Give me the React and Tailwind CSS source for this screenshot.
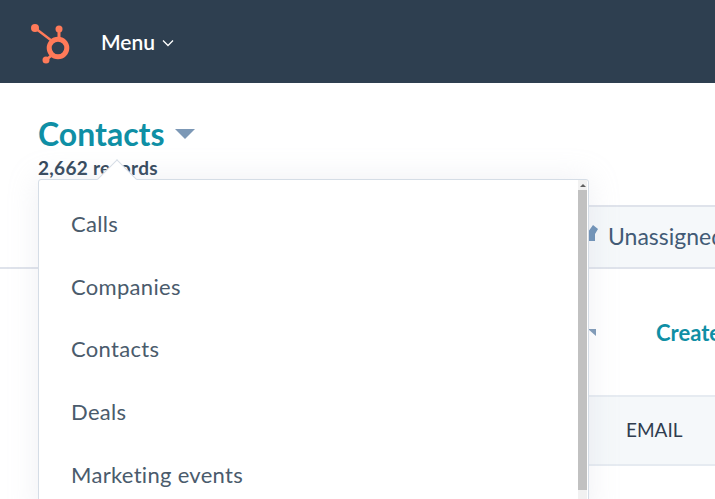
const items = ['Calls', 'Companies', 'Contacts', 'Deals', 'Marketing events'];

const App = () => {
  return (
    <div className="relative h-[499px] w-[715px] overflow-hidden bg-white font-['Lato',sans-serif] text-[#33475b]">
      {/* Top nav */}
      <header className="flex h-[83px] items-center bg-[#2e3f50] pl-[30px]">
        <svg width="42" height="44" viewBox="0 0 42 44" fill="none" className="shrink-0">
          <g stroke="#ff7a59" strokeLinecap="round">
            <circle cx="28" cy="28" r="8.8" strokeWidth="5" />
            <path d="M5 8 L22 21" strokeWidth="2.4" />
            <path d="M29 9 V18" strokeWidth="3" />
            <path d="M16 40 L22 35" strokeWidth="2.8" />
          </g>
          <circle cx="5" cy="8" r="4" fill="#ff7a59" />
          <circle cx="29" cy="9" r="3.5" fill="#ff7a59" />
          <circle cx="16" cy="40" r="3.5" fill="#ff7a59" />
        </svg>
        <span className="ml-[29px] text-[21px] font-semibold text-white">Menu</span>
        <svg width="12" height="8" viewBox="0 0 12 8" fill="none" className="ml-[7px] mt-[3px]">
          <path d="M1 1.5 L6 6.5 L11 1.5" stroke="#fff" strokeWidth="1.3" />
        </svg>
      </header>

      {/* Page heading */}
      <div className="pl-[38px] pt-[32px]">
        <div className="flex items-center">
          <h1 className="text-[32px] font-bold leading-[38px] text-[#0f8fa5]">Contacts</h1>
          <div className="ml-[10px] h-0 w-0 border-x-[10px] border-t-[10px] border-x-transparent border-t-[#7c98b6]" />
        </div>
        <p className="mt-[3px] text-[19px] font-bold leading-[24px] tracking-[0.3px]">2,662 records</p>
      </div>

      {/* Views tab row */}
      <div className="mt-[25px] flex h-[64px]">
        <div className="w-[588px] border-b-2 border-[#dfe3eb]" />
        <div className="flex flex-1 items-center overflow-hidden border-y-2 border-[#dfe3eb] bg-[#f5f8fa]">
          <svg width="12" height="17" viewBox="0 0 12 17" className="-mt-[8px] shrink-0">
            <path d="M0 7 L5 0 L10 4 L7 9 L7 16 L0 16 Z" fill="#6a8fb5" />
          </svg>
          <span className="ml-[8px] -mt-[2px] whitespace-nowrap text-[23px] text-[#425b76]">Unassigned</span>
        </div>
      </div>

      {/* Actions row */}
      <div className="flex h-[126px] items-center pl-[588px]">
        <div className="h-0 w-0 border-l-[8px] border-t-[7px] border-l-transparent border-t-[#7c98b6]" />
        <span className="ml-[60px] whitespace-nowrap text-[22px] font-bold text-[#0f8fa5]">Create</span>
      </div>

      {/* Table header */}
      <div className="flex h-[71px]">
        <div className="w-[588px]" />
        <div className="flex flex-1 items-center border-y-2 border-[#e6ebf1] bg-[#f5f8fa] pl-[38px]">
          <span className="text-[19px] text-[#2f3d4f]">EMAIL</span>
        </div>
      </div>

      {/* Object type dropdown */}
      <div className="absolute left-[38px] top-[179px] h-[340px] w-[551px] rounded-[3px] border border-[#d5dde6] bg-white shadow-[0_0_30px_rgba(190,195,210,0.25)]">
        <div className="absolute -top-[15px] left-[64px] h-[28px] w-[28px] rotate-45 border-l border-t border-[#d5dde6] bg-white" />
        <ul className="relative pl-[32px] pt-[12px]">
          {items.map((item) => (
            <li key={item} className="flex h-[62.7px] items-center text-[22px] tracking-[0.3px] text-[#4a5b6c]">
              {item}
            </li>
          ))}
        </ul>
        {/* Scrollbar */}
        <div className="absolute bottom-0 right-px top-0 flex w-[9px] flex-col bg-[#f1f1f1]">
          <div className="flex h-[10px] items-center justify-center">
            <div className="h-0 w-0 border-x-[3px] border-b-[3px] border-x-transparent border-b-[#606060]" />
          </div>
          <div className="h-[300px] bg-[#c1c1c1]" />
        </div>
      </div>
    </div>
  );
};

export default App;
